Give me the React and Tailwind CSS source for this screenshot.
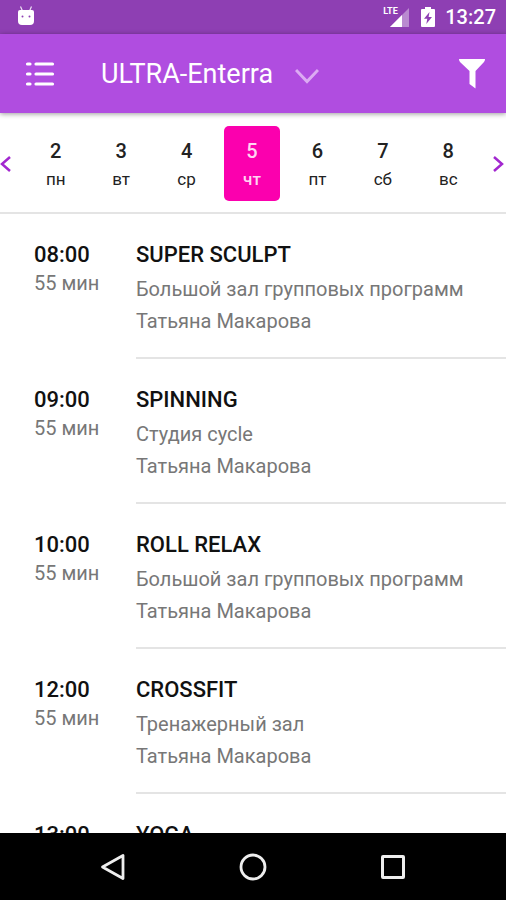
import React, { useState } from 'react'

const days = [
  { date: 2, name: 'пн' },
  { date: 3, name: 'вт' },
  { date: 4, name: 'ср' },
  { date: 5, name: 'чт' },
  { date: 6, name: 'пт' },
  { date: 7, name: 'сб' },
  { date: 8, name: 'вс' },
]

const classes = [
  { time: '08:00', length: '55 мин', title: 'SUPER SCULPT', room: 'Большой зал групповых программ', trainer: 'Татьяна Макарова' },
  { time: '09:00', length: '55 мин', title: 'SPINNING', room: 'Студия cycle', trainer: 'Татьяна Макарова' },
  { time: '10:00', length: '55 мин', title: 'ROLL RELAX', room: 'Большой зал групповых программ', trainer: 'Татьяна Макарова' },
  { time: '12:00', length: '55 мин', title: 'CROSSFIT', room: 'Тренажерный зал', trainer: 'Татьяна Макарова' },
  { time: '13:00', title: 'YOGA' },
]

function StatusBar() {
  return (
    <div className="flex h-[34px] shrink-0 items-center bg-[#8e3fb3] pr-[10px] pl-[17px] text-white">
      <svg className="mb-[2px]" width="18" height="22" viewBox="0 0 18 22" fill="currentColor" aria-hidden="true">
        <path d="M3.5 1.5 5.5 6M14.5 1.5 12.5 6" stroke="currentColor" strokeWidth="1.2" opacity="0.85" />
        <path d="M3 5h12q2 0 2 2v9q0 4-4 4H5q-4 0-4-4V7q0-2 2-2z" />
        <circle cx="5.5" cy="11.5" r="1" fill="#8e3fb3" />
        <circle cx="12.5" cy="11.5" r="1" fill="#8e3fb3" />
      </svg>
      <div className="ml-auto flex items-center">
        <div className="relative">
          <svg width="27" height="22" viewBox="0 0 27 22" aria-hidden="true">
            <path d="M26 2v19H7z" fill="#b98ad0" />
            <path d="M19 9v12H7z" fill="#fff" />
          </svg>
          <span className="absolute top-0 left-0 bg-[#8e3fb3] text-[9px] leading-[10px] font-bold">LTE</span>
        </div>
        <svg className="ml-[10px]" width="16" height="22" viewBox="0 0 16 22" aria-hidden="true">
          <path d="M5 1h6v2h3q1 0 1 1v16q0 1-1 1H2q-1 0-1-1V4q0-1 1-1h3z" fill="#fff" />
          <path d="M9.5 6 4 12.8h3.3L6.3 18 12 11H8.6z" fill="#8e3fb3" />
        </svg>
        <span className="ml-[9px] text-[20px] leading-6 font-medium">13:27</span>
      </div>
    </div>
  )
}

function Header() {
  return (
    <header className="z-10 flex h-[79px] shrink-0 items-center bg-[#b04de0] pr-5 pl-[25px] text-white shadow-[0_1px_5px_rgba(0,0,0,0.4)]">
      <button aria-label="Меню">
        <svg width="30" height="26" viewBox="0 0 30 26" fill="none" stroke="currentColor" strokeWidth="3.2" strokeLinecap="round" aria-hidden="true">
          <path d="M2.5 3H5M11 3H27.5M2.5 13H5M11 13H27.5M2.5 23H5M11 23H27.5" />
        </svg>
      </button>
      <button className="ml-[46px] flex items-center">
        <span className="text-[27px] leading-8">ULTRA-Enterra</span>
        <svg className="ml-[22px] mt-1 text-[#dcabf3]" width="24" height="16" viewBox="0 0 24 16" fill="none" stroke="currentColor" strokeWidth="3" aria-hidden="true">
          <path d="M1 2 12 13.5 23 2" />
        </svg>
      </button>
      <button className="ml-auto" aria-label="Фильтр">
        <svg width="28" height="32" viewBox="0 0 28 32" fill="currentColor" aria-hidden="true">
          <path d="M1.5 1h25q.8 0 .5 1l-1 2-8.5 9V30.5l-6-4.5V13L2 4 1 2q-.3-1 .5-1z" />
        </svg>
      </button>
    </header>
  )
}

function DayPicker({ selected, onSelect }) {
  return (
    <nav className="flex shrink-0 items-center border-b-2 border-[#e4e4e4] pt-[13px] pb-[11px]">
      <button className="w-[23px] shrink-0 text-[#a227cf]" aria-label="Назад">
        <svg width="12" height="18" viewBox="0 0 12 18" fill="none" stroke="currentColor" strokeWidth="2.5" aria-hidden="true">
          <path d="M10 2 2 9 10 16" />
        </svg>
      </button>
      <div className="grid flex-1 grid-cols-7">
        {days.map((day) => (
          <button
            key={day.date}
            onClick={() => onSelect(day.date)}
            className={`mx-auto flex h-[75px] w-[56px] flex-col items-center rounded-[5px] pt-[11px] ${
              selected === day.date ? 'bg-[#fb00ae] font-medium text-[#ffd5f2]' : 'text-[#222]'
            }`}
          >
            <span className="text-[20px] leading-7 font-medium">{day.date}</span>
            <span className="text-[17px] leading-7">{day.name}</span>
          </button>
        ))}
      </div>
      <button className="flex w-[25px] shrink-0 justify-end pr-[2px] text-[#a227cf]" aria-label="Вперёд">
        <svg width="12" height="18" viewBox="0 0 12 18" fill="none" stroke="currentColor" strokeWidth="2.5" aria-hidden="true">
          <path d="M2 2 10 9 2 16" />
        </svg>
      </button>
    </nav>
  )
}

function ClassItem({ item }) {
  return (
    <li className="flex pl-[34px]">
      <div className="w-[102px] shrink-0 pt-[27px]">
        <div className="text-[22px] leading-7 font-medium text-[#111]">{item.time}</div>
        {item.length && <div className="text-[20px] leading-7 text-[#777]">{item.length}</div>}
      </div>
      <div className="flex-1 border-b-2 border-[#e4e4e4] pt-[27px] pb-5">
        <h2 className="mb-1 text-[22px] leading-7 font-medium text-[#111]">{item.title}</h2>
        {item.room && <p className="text-[20px] leading-8 text-[#777]">{item.room}</p>}
        {item.trainer && <p className="text-[20px] leading-8 text-[#777]">{item.trainer}</p>}
      </div>
    </li>
  )
}

function SystemNav() {
  return (
    <div className="flex h-[67px] shrink-0 items-center justify-center gap-[112px] bg-black text-[#eee]">
      <button aria-label="Назад">
        <svg width="28" height="28" viewBox="0 0 28 28" fill="none" stroke="currentColor" strokeWidth="2.8" strokeLinejoin="round" aria-hidden="true">
          <path d="M24 2.5V25.5L3.5 14z" />
        </svg>
      </button>
      <button aria-label="Домой">
        <svg width="28" height="28" viewBox="0 0 28 28" fill="none" stroke="currentColor" strokeWidth="2.8" aria-hidden="true">
          <circle cx="14" cy="14" r="12" />
        </svg>
      </button>
      <button aria-label="Недавние">
        <svg width="28" height="28" viewBox="0 0 28 28" fill="none" stroke="currentColor" strokeWidth="3" strokeLinejoin="round" aria-hidden="true">
          <rect x="3.5" y="3.5" width="21" height="21" rx="0.5" />
        </svg>
      </button>
    </div>
  )
}

export default function App() {
  const [selected, setSelected] = useState(5)

  return (
    <div className="flex h-screen flex-col bg-white font-[Roboto,sans-serif]">
      <StatusBar />
      <Header />
      <DayPicker selected={selected} onSelect={setSelected} />
      <ul className="min-h-0 flex-1 overflow-hidden">
        {classes.map((item) => (
          <ClassItem key={item.time} item={item} />
        ))}
      </ul>
      <SystemNav />
    </div>
  )
}
